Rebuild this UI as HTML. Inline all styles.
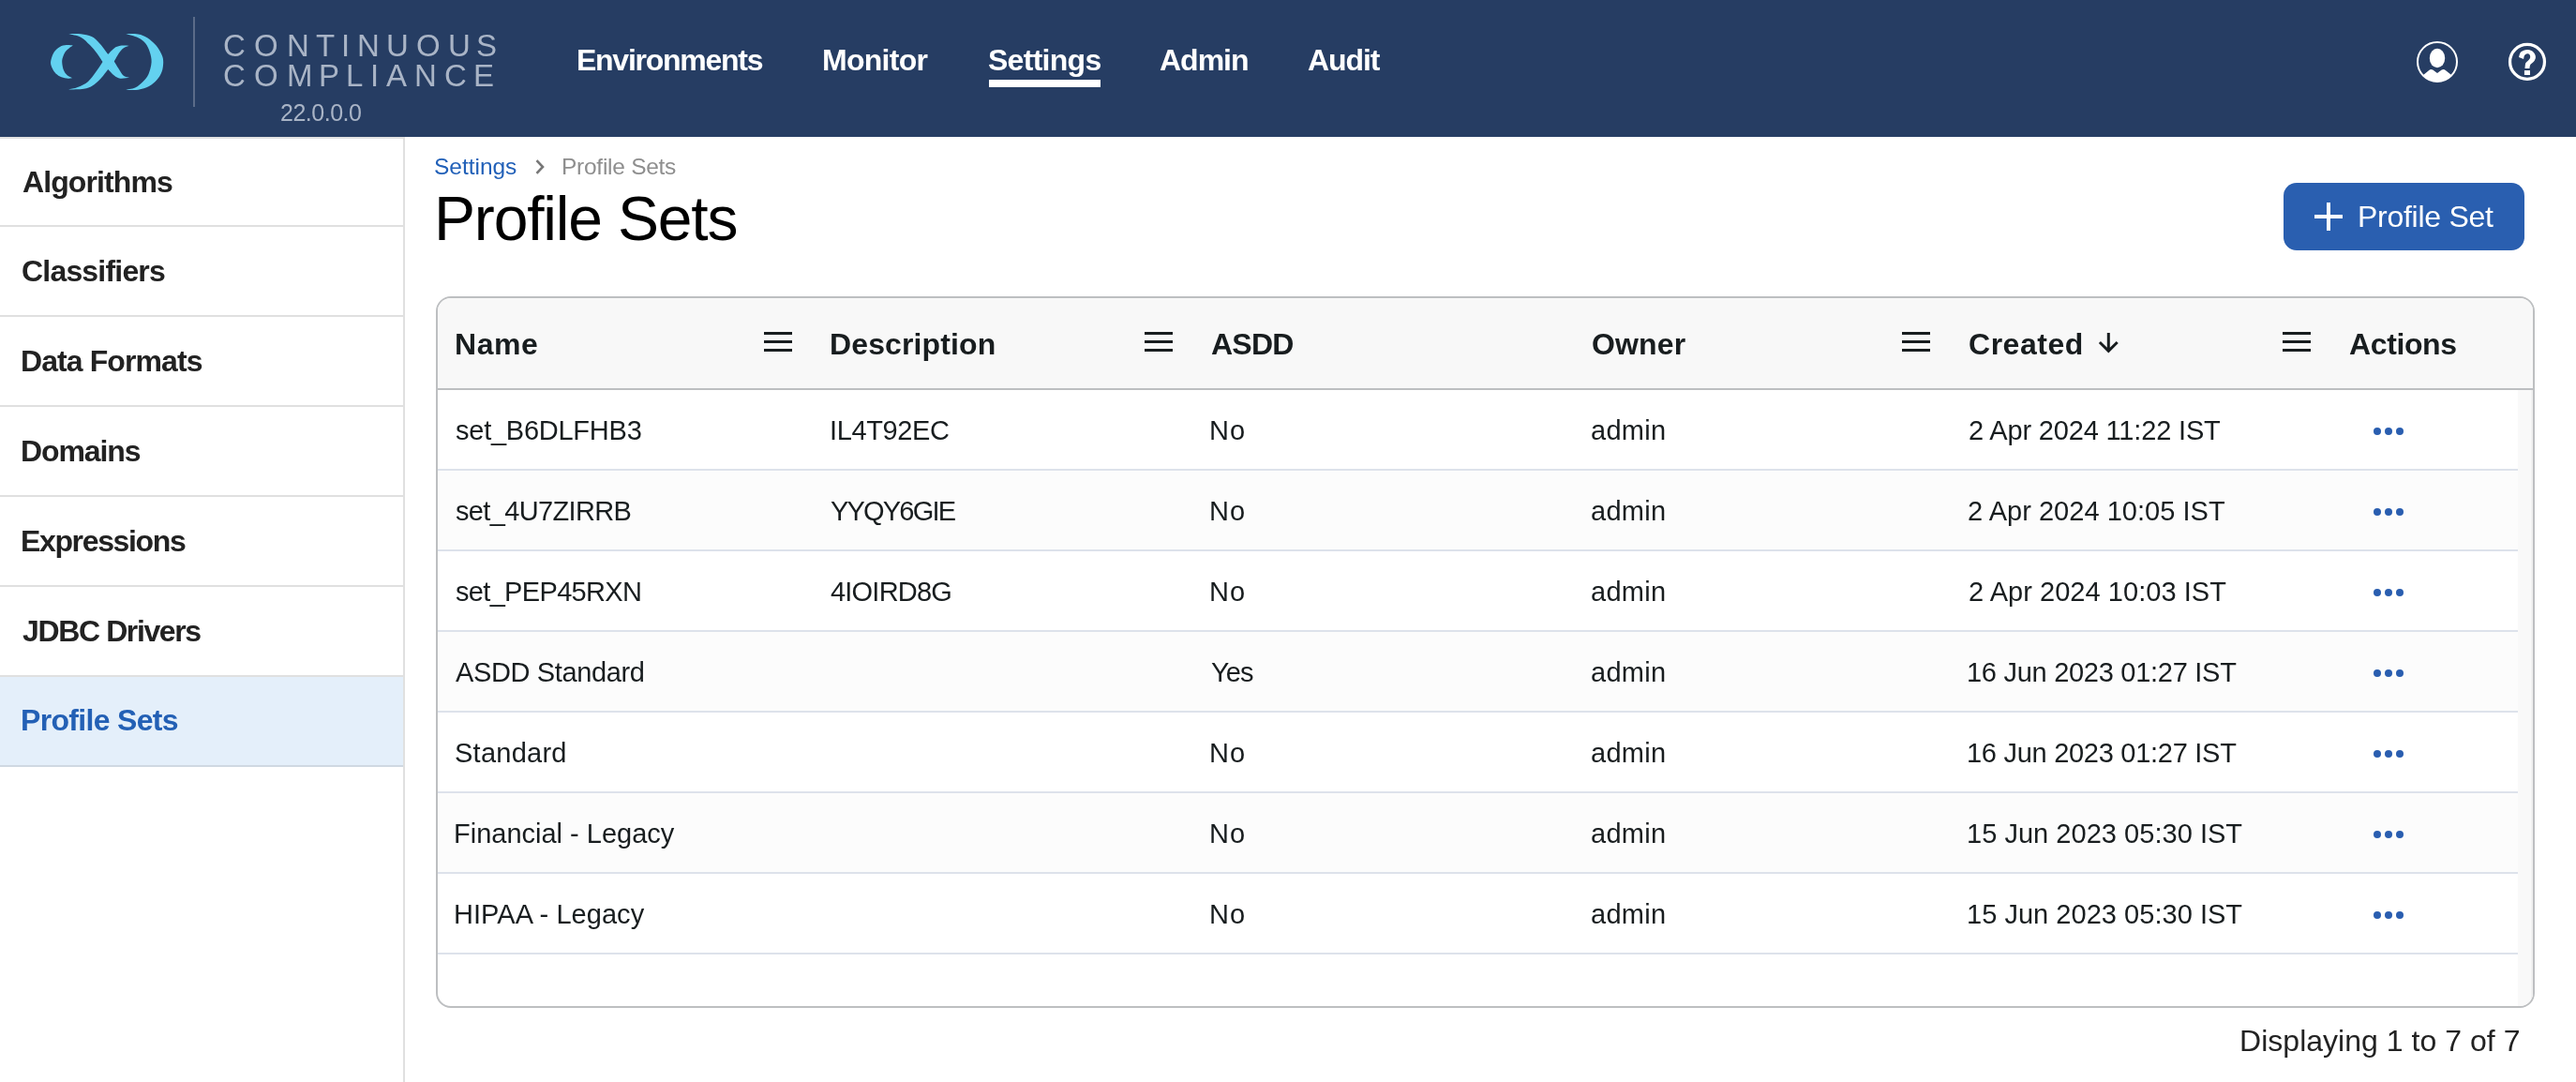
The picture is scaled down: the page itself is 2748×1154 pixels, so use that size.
<!DOCTYPE html>
<html><head><meta charset="utf-8"><style>
html,body{margin:0;padding:0;}
body{width:2748px;height:1154px;overflow:hidden;position:relative;background:#fff;font-family:"Liberation Sans",sans-serif;}
.t{position:absolute;white-space:pre;line-height:normal;-webkit-font-smoothing:antialiased;will-change:transform;}
.a{position:absolute;}
</style></head><body>
<div class="a" style="left:0;top:0;width:2748px;height:146px;background:#263D63;"></div>
<svg class="a" style="left:0;top:0" width="220" height="146" viewBox="0 0 220 146">
<g fill="#63D1F0"><path d="M77.70,48.50 C76.55,48.43 73.10,47.87 70.80,48.10 C68.50,48.33 66.05,48.72 63.90,49.90 C61.75,51.08 59.48,52.85 57.90,55.20 C56.32,57.55 54.95,61.53 54.40,64.00 C53.85,66.47 53.95,67.83 54.60,70.00 C55.25,72.17 56.75,75.07 58.30,77.00 C59.85,78.93 61.82,80.50 63.90,81.60 C65.98,82.70 68.57,83.33 70.80,83.60 C73.03,83.87 76.22,83.27 77.30,83.20 L77.30,83.20 C76.37,82.70 73.25,81.55 71.70,80.20 C70.15,78.85 68.92,77.48 68.00,75.10 C67.08,72.72 66.27,68.52 66.20,65.90 C66.13,63.28 66.83,61.40 67.60,59.40 C68.37,57.40 69.12,55.72 70.80,53.90 C72.48,52.08 76.55,49.40 77.70,48.50 Z"/><path d="M134.10,36.10 C136.32,36.17 143.57,35.80 147.40,36.50 C151.23,37.20 153.87,38.25 157.10,40.30 C160.33,42.35 164.22,45.77 166.80,48.80 C169.38,51.83 171.37,55.60 172.60,58.50 C173.83,61.40 174.20,63.18 174.20,66.20 C174.20,69.22 173.72,73.47 172.60,76.60 C171.48,79.73 169.77,82.42 167.50,85.00 C165.23,87.58 162.35,90.32 159.00,92.10 C155.65,93.88 151.70,95.10 147.40,95.70 C143.10,96.30 135.57,95.70 133.20,95.70 L133.20,95.70 C135.03,95.32 140.97,94.87 144.20,93.40 C147.43,91.93 150.23,89.27 152.60,86.90 C154.97,84.53 156.90,82.65 158.40,79.20 C159.90,75.75 161.38,70.20 161.60,66.20 C161.82,62.20 160.77,58.53 159.70,55.20 C158.63,51.87 157.25,48.68 155.20,46.20 C153.15,43.72 150.92,41.98 147.40,40.30 C143.88,38.62 136.32,36.80 134.10,36.10 Z"/><path d="M73.20,36.30 C75.37,36.30 82.10,35.83 86.20,36.30 C90.30,36.77 94.47,37.45 97.80,39.10 C101.13,40.75 103.28,43.08 106.20,46.20 C109.12,49.32 113.78,55.87 115.30,57.80 L115.30,57.80 C116.38,56.73 119.63,52.90 121.80,51.40 C123.97,49.90 125.67,49.23 128.30,48.80 C130.93,48.37 136.05,48.80 137.60,48.80 L137.60,48.80 C136.58,49.23 133.27,50.12 131.50,51.40 C129.73,52.68 128.62,54.13 127.00,56.50 C125.38,58.87 122.67,64.08 121.80,65.60 L121.80,65.60 C122.67,67.00 125.28,71.42 127.00,74.00 C128.72,76.58 130.27,79.63 132.10,81.10 C133.93,82.57 137.02,82.52 138.00,82.80 L138.00,82.80 C136.38,82.95 131.00,84.08 128.30,83.70 C125.60,83.32 123.97,82.12 121.80,80.50 C119.63,78.88 116.38,75.08 115.30,74.00 L115.30,74.00 C114.00,75.62 110.30,80.78 107.50,83.70 C104.70,86.62 101.52,89.67 98.50,91.50 C95.48,93.33 93.62,94.03 89.40,94.70 C85.18,95.37 75.90,95.37 73.20,95.50 L73.20,95.50 C74.82,95.10 79.43,94.52 82.90,93.10 C86.37,91.68 90.75,89.75 94.00,87.00 C97.25,84.25 99.82,80.12 102.40,76.60 C104.98,73.08 108.32,67.68 109.50,65.90 L109.50,65.90 C108.53,64.45 105.97,60.17 103.70,57.20 C101.43,54.23 98.82,51.02 95.90,48.10 C92.98,45.18 89.98,41.67 86.20,39.70 C82.42,37.73 75.37,36.87 73.20,36.30 Z"/></g></svg>
<div class="a" style="left:206px;top:18px;width:2px;height:96px;background:#5B6C89;"></div>
<div class="t" style="left:238.01px;top:29.84px;font-size:33px;color:#A9B4C6;">C</div>
<div class="t" style="left:271.48px;top:29.84px;font-size:33px;color:#A9B4C6;">O</div>
<div class="t" style="left:305.62px;top:29.84px;font-size:33px;color:#A9B4C6;">N</div>
<div class="t" style="left:336.58px;top:29.84px;font-size:33px;color:#A9B4C6;">T</div>
<div class="t" style="left:363.98px;top:29.84px;font-size:33px;color:#A9B4C6;">I</div>
<div class="t" style="left:381.07px;top:29.84px;font-size:33px;color:#A9B4C6;">N</div>
<div class="t" style="left:411.97px;top:29.84px;font-size:33px;color:#A9B4C6;">U</div>
<div class="t" style="left:443.93px;top:29.84px;font-size:33px;color:#A9B4C6;">O</div>
<div class="t" style="left:477.62px;top:29.84px;font-size:33px;color:#A9B4C6;">U</div>
<div class="t" style="left:508.05px;top:29.84px;font-size:33px;color:#A9B4C6;">S</div>
<div class="t" style="left:238.01px;top:61.94px;font-size:33px;color:#A9B4C6;">C</div>
<div class="t" style="left:271.48px;top:61.94px;font-size:33px;color:#A9B4C6;">O</div>
<div class="t" style="left:305.75px;top:61.94px;font-size:33px;color:#A9B4C6;">M</div>
<div class="t" style="left:340.41px;top:61.94px;font-size:33px;color:#A9B4C6;">P</div>
<div class="t" style="left:369.40px;top:61.94px;font-size:33px;color:#A9B4C6;">L</div>
<div class="t" style="left:394.78px;top:61.94px;font-size:33px;color:#A9B4C6;">I</div>
<div class="t" style="left:412.46px;top:61.94px;font-size:33px;color:#A9B4C6;">A</div>
<div class="t" style="left:442.02px;top:61.94px;font-size:33px;color:#A9B4C6;">N</div>
<div class="t" style="left:474.41px;top:61.94px;font-size:33px;color:#A9B4C6;">C</div>
<div class="t" style="left:505.30px;top:61.94px;font-size:33px;color:#A9B4C6;">E</div>
<div class="t" style="left:299.35px;top:106.00px;font-size:25px;font-weight:400;color:#A9B4C6;letter-spacing:-0.486px;">22.0.0.0</div>
<div class="t" style="left:614.86px;top:46.16px;font-size:32px;font-weight:700;color:#fff;letter-spacing:-1.265px;">Environments</div>
<div class="t" style="left:877.26px;top:46.16px;font-size:32px;font-weight:700;color:#fff;letter-spacing:-0.710px;">Monitor</div>
<div class="t" style="left:1053.89px;top:46.16px;font-size:32px;font-weight:700;color:#fff;letter-spacing:-0.720px;">Settings</div>
<div class="t" style="left:1237.34px;top:46.16px;font-size:32px;font-weight:700;color:#fff;letter-spacing:-1.010px;">Admin</div>
<div class="t" style="left:1395.44px;top:46.16px;font-size:32px;font-weight:700;color:#fff;letter-spacing:-1.080px;">Audit</div>
<div class="a" style="left:1055px;top:85px;width:119px;height:8px;background:#fff;"></div>
<svg class="a" style="left:2570px;top:36px" width="60" height="60" viewBox="0 0 60 60">
<defs><clipPath id="uc"><circle cx="30" cy="30" r="21"/></clipPath></defs>
<circle cx="30" cy="30" r="21" fill="none" stroke="#fff" stroke-width="2"/>
<ellipse cx="30" cy="26" rx="8.2" ry="10.2" fill="#fff"/>
<path clip-path="url(#uc)" d="M10,47 L16,43.3 L21.2,38.9 Q23.2,37.2 25.3,38.6 L30,41.9 L34.7,38.6 Q36.8,37.2 38.8,38.9 L44.2,43.3 L50,47 L50,60 L10,60 Z" fill="#fff"/>
</svg>
<svg class="a" style="left:2666px;top:36px" width="60" height="60" viewBox="0 0 60 60">
<circle cx="30" cy="29.9" r="18.45" fill="none" stroke="#fff" stroke-width="3.25"/>
<path d="M21.00,25.10 C21.27,24.28 21.72,21.42 22.60,20.20 C23.48,18.98 25.03,18.35 26.30,17.80 C27.57,17.25 28.85,16.87 30.20,16.90 C31.55,16.93 33.15,17.32 34.40,18.00 C35.65,18.68 36.95,19.82 37.70,21.00 C38.45,22.18 38.90,23.82 38.90,25.10 C38.90,26.38 38.27,27.72 37.70,28.70 C37.13,29.68 36.25,30.25 35.50,31.00 C34.75,31.75 33.72,32.18 33.20,33.20 C32.68,34.22 32.53,36.45 32.40,37.10 L27.50,37.10 C27.57,36.38 27.70,33.85 27.90,32.80 C28.10,31.75 28.02,31.68 28.70,30.80 C29.38,29.92 31.25,28.45 32.00,27.50 C32.75,26.55 33.13,25.98 33.20,25.10 C33.27,24.22 32.93,22.85 32.40,22.20 C31.87,21.55 30.88,21.07 30.00,21.20 C29.12,21.33 27.75,22.05 27.10,23.00 C26.45,23.95 26.27,26.25 26.10,26.90 Z" fill="#fff"/>
<rect x="26.9" y="39.1" width="6.1" height="4.9" fill="#fff"/>
</svg>
<div class="a" style="left:0;top:146px;width:430px;height:2px;background:#E2E2E2;"></div>
<div class="a" style="left:430px;top:146px;width:2px;height:1008px;background:#E0E0E0;"></div>
<div class="a" style="left:0;top:722px;width:430px;height:94px;background:#E4EFFA;"></div>
<div class="a" style="left:0;top:240px;width:430px;height:2px;background:#E0E0E0;"></div>
<div class="a" style="left:0;top:336px;width:430px;height:2px;background:#E0E0E0;"></div>
<div class="a" style="left:0;top:432px;width:430px;height:2px;background:#E0E0E0;"></div>
<div class="a" style="left:0;top:528px;width:430px;height:2px;background:#E0E0E0;"></div>
<div class="a" style="left:0;top:624px;width:430px;height:2px;background:#E0E0E0;"></div>
<div class="a" style="left:0;top:720px;width:430px;height:2px;background:#E0E0E0;"></div>
<div class="a" style="left:0;top:816px;width:430px;height:2px;background:#CFD8E2;"></div>
<div class="t" style="left:23.64px;top:175.56px;font-size:32px;font-weight:700;color:#222222;letter-spacing:-0.902px;">Algorithms</div>
<div class="t" style="left:23.32px;top:271.36px;font-size:32px;font-weight:700;color:#222222;letter-spacing:-0.806px;">Classifiers</div>
<div class="t" style="left:22.36px;top:367.16px;font-size:32px;font-weight:700;color:#222222;letter-spacing:-0.905px;">Data Formats</div>
<div class="t" style="left:22.36px;top:462.96px;font-size:32px;font-weight:700;color:#222222;letter-spacing:-1.087px;">Domains</div>
<div class="t" style="left:22.36px;top:558.76px;font-size:32px;font-weight:700;color:#222222;letter-spacing:-1.356px;">Expressions</div>
<div class="t" style="left:23.96px;top:654.56px;font-size:32px;font-weight:700;color:#222222;letter-spacing:-1.378px;">JDBC Drivers</div>
<div class="t" style="left:22.36px;top:750.36px;font-size:32px;font-weight:700;color:#2360B5;letter-spacing:-0.680px;">Profile Sets</div>
<div class="t" style="left:463.07px;top:164.26px;font-size:24.5px;font-weight:400;color:#2160B8;letter-spacing:-0.026px;">Settings</div>
<svg class="a" style="left:566px;top:166px" width="20" height="24" viewBox="0 0 20 24"><path d="M6.5,5.2 L13,12 L6.5,18.8" fill="none" stroke="#777" stroke-width="2.6"/></svg>
<div class="t" style="left:598.64px;top:164.26px;font-size:24.5px;font-weight:400;color:#8E8E8E;letter-spacing:-0.264px;">Profile Sets</div>
<div class="t" style="left:463.02px;top:194.78px;font-size:66px;font-weight:400;color:#000;letter-spacing:-1.182px;">Profile Sets</div>
<div class="a" style="left:2436px;top:195px;width:257px;height:72px;background:#2A5FB0;border-radius:14px;"></div>
<div class="a" style="left:2469px;top:229.2px;width:30px;height:3.6px;background:#fff;"></div>
<div class="a" style="left:2482.2px;top:216px;width:3.6px;height:30px;background:#fff;"></div>
<div class="t" style="left:2515.24px;top:212.56px;font-size:32px;font-weight:400;color:#fff;letter-spacing:-0.266px;">Profile Set</div>
<div class="a" style="left:465px;top:316px;width:2235px;height:755px;border:2px solid #BDBFC1;border-radius:16px;overflow:hidden;background:#fff;">
<div class="a" style="left:0;top:0;width:2235px;height:96px;background:#F8F8F8;"></div>
<div class="a" style="left:0;top:96px;width:2235px;height:2px;background:#BDBFC1;"></div>
<div class="a" style="left:2219px;top:98px;width:16px;height:700px;background:#F9F9F9;"></div>
<div class="a" style="left:2233px;top:98px;width:2px;height:700px;background:#F0F0F0;"></div>
<div class="a" style="left:0;top:98px;width:2219px;height:84px;background:#FFFFFF;"></div>
<div class="a" style="left:0;top:182px;width:2219px;height:2px;background:#DDE2EB;"></div>
<div class="a" style="left:0;top:184px;width:2219px;height:84px;background:#FCFCFC;"></div>
<div class="a" style="left:0;top:268px;width:2219px;height:2px;background:#DDE2EB;"></div>
<div class="a" style="left:0;top:270px;width:2219px;height:84px;background:#FFFFFF;"></div>
<div class="a" style="left:0;top:354px;width:2219px;height:2px;background:#DDE2EB;"></div>
<div class="a" style="left:0;top:356px;width:2219px;height:84px;background:#FCFCFC;"></div>
<div class="a" style="left:0;top:440px;width:2219px;height:2px;background:#DDE2EB;"></div>
<div class="a" style="left:0;top:442px;width:2219px;height:84px;background:#FFFFFF;"></div>
<div class="a" style="left:0;top:526px;width:2219px;height:2px;background:#DDE2EB;"></div>
<div class="a" style="left:0;top:528px;width:2219px;height:84px;background:#FCFCFC;"></div>
<div class="a" style="left:0;top:612px;width:2219px;height:2px;background:#DDE2EB;"></div>
<div class="a" style="left:0;top:614px;width:2219px;height:84px;background:#FFFFFF;"></div>
<div class="a" style="left:0;top:698px;width:2219px;height:2px;background:#DDE2EB;"></div>
</div>
<div class="t" style="left:485.36px;top:348.56px;font-size:32px;font-weight:700;color:#181D1F;letter-spacing:0.587px;">Name</div>
<div class="t" style="left:885.06px;top:348.56px;font-size:32px;font-weight:700;color:#181D1F;letter-spacing:0.116px;">Description</div>
<div class="t" style="left:1291.94px;top:348.56px;font-size:32px;font-weight:700;color:#181D1F;letter-spacing:-0.773px;">ASDD</div>
<div class="t" style="left:1697.52px;top:348.56px;font-size:32px;font-weight:700;color:#181D1F;letter-spacing:0.145px;">Owner</div>
<div class="t" style="left:2100.02px;top:348.56px;font-size:32px;font-weight:700;color:#181D1F;letter-spacing:0.527px;">Created</div>
<div class="t" style="left:2506.44px;top:348.56px;font-size:32px;font-weight:700;color:#181D1F;letter-spacing:-0.380px;">Actions</div>
<div class="a" style="left:815px;top:354.1px;width:30px;height:2.75px;background:#181D1F;"></div>
<div class="a" style="left:815px;top:363.1px;width:30px;height:2.75px;background:#181D1F;"></div>
<div class="a" style="left:815px;top:372.2px;width:30px;height:2.75px;background:#181D1F;"></div>
<div class="a" style="left:1221px;top:354.1px;width:30px;height:2.75px;background:#181D1F;"></div>
<div class="a" style="left:1221px;top:363.1px;width:30px;height:2.75px;background:#181D1F;"></div>
<div class="a" style="left:1221px;top:372.2px;width:30px;height:2.75px;background:#181D1F;"></div>
<div class="a" style="left:2029px;top:354.1px;width:30px;height:2.75px;background:#181D1F;"></div>
<div class="a" style="left:2029px;top:363.1px;width:30px;height:2.75px;background:#181D1F;"></div>
<div class="a" style="left:2029px;top:372.2px;width:30px;height:2.75px;background:#181D1F;"></div>
<div class="a" style="left:2435px;top:354.1px;width:30px;height:2.75px;background:#181D1F;"></div>
<div class="a" style="left:2435px;top:363.1px;width:30px;height:2.75px;background:#181D1F;"></div>
<div class="a" style="left:2435px;top:372.2px;width:30px;height:2.75px;background:#181D1F;"></div>
<svg class="a" style="left:2234px;top:352px" width="30" height="28" viewBox="0 0 30 28"><path d="M15.3,3 L15.3,21.5 M5.9,13 L15.3,22.3 L24.7,13" fill="none" stroke="#181D1F" stroke-width="3"/></svg>
<div class="t" style="left:485.83px;top:443.32px;font-size:29px;font-weight:400;color:#181D1F;letter-spacing:-0.248px;">set_B6DLFHB3</div>
<div class="t" style="left:884.79px;top:443.32px;font-size:29px;font-weight:400;color:#181D1F;letter-spacing:-0.376px;">IL4T92EC</div>
<div class="t" style="left:1290.18px;top:443.32px;font-size:29px;font-weight:400;color:#181D1F;letter-spacing:1.060px;">No</div>
<div class="t" style="left:1697.14px;top:443.32px;font-size:29px;font-weight:400;color:#181D1F;letter-spacing:0.255px;">admin</div>
<div class="t" style="left:2099.85px;top:443.32px;font-size:29px;font-weight:400;color:#181D1F;letter-spacing:-0.163px;">2 Apr 2024 11:22 IST</div>
<svg class="a" style="left:2528px;top:452px" width="40" height="16" viewBox="0 0 40 16"><g fill="#2A5EB0"><circle cx="8" cy="8" r="4"/><circle cx="20" cy="8" r="4"/><circle cx="32" cy="8" r="4"/></g></svg>
<div class="t" style="left:485.93px;top:529.32px;font-size:29px;font-weight:400;color:#181D1F;letter-spacing:-0.651px;">set_4U7ZIRRB</div>
<div class="t" style="left:886.13px;top:529.32px;font-size:29px;font-weight:400;color:#181D1F;letter-spacing:-1.803px;">YYQY6GIE</div>
<div class="t" style="left:1290.18px;top:529.32px;font-size:29px;font-weight:400;color:#181D1F;letter-spacing:1.060px;">No</div>
<div class="t" style="left:1697.14px;top:529.32px;font-size:29px;font-weight:400;color:#181D1F;letter-spacing:0.255px;">admin</div>
<div class="t" style="left:2099.35px;top:529.32px;font-size:29px;font-weight:400;color:#181D1F;letter-spacing:0.031px;">2 Apr 2024 10:05 IST</div>
<svg class="a" style="left:2528px;top:538px" width="40" height="16" viewBox="0 0 40 16"><g fill="#2A5EB0"><circle cx="8" cy="8" r="4"/><circle cx="20" cy="8" r="4"/><circle cx="32" cy="8" r="4"/></g></svg>
<div class="t" style="left:485.93px;top:615.32px;font-size:29px;font-weight:400;color:#181D1F;letter-spacing:-0.673px;">set_PEP45RXN</div>
<div class="t" style="left:886.42px;top:615.32px;font-size:29px;font-weight:400;color:#181D1F;letter-spacing:-0.790px;">4IOIRD8G</div>
<div class="t" style="left:1290.18px;top:615.32px;font-size:29px;font-weight:400;color:#181D1F;letter-spacing:1.060px;">No</div>
<div class="t" style="left:1697.14px;top:615.32px;font-size:29px;font-weight:400;color:#181D1F;letter-spacing:0.255px;">admin</div>
<div class="t" style="left:2099.95px;top:615.32px;font-size:29px;font-weight:400;color:#181D1F;letter-spacing:0.041px;">2 Apr 2024 10:03 IST</div>
<svg class="a" style="left:2528px;top:624px" width="40" height="16" viewBox="0 0 40 16"><g fill="#2A5EB0"><circle cx="8" cy="8" r="4"/><circle cx="20" cy="8" r="4"/><circle cx="32" cy="8" r="4"/></g></svg>
<div class="t" style="left:486.30px;top:701.32px;font-size:29px;font-weight:400;color:#181D1F;letter-spacing:-0.371px;">ASDD Standard</div>
<div class="t" style="left:1291.93px;top:701.32px;font-size:29px;font-weight:400;color:#181D1F;letter-spacing:-0.865px;">Yes</div>
<div class="t" style="left:1697.14px;top:701.32px;font-size:29px;font-weight:400;color:#181D1F;letter-spacing:0.255px;">admin</div>
<div class="t" style="left:2098.48px;top:701.32px;font-size:29px;font-weight:400;color:#181D1F;letter-spacing:-0.279px;">16 Jun 2023 01:27 IST</div>
<svg class="a" style="left:2528px;top:710px" width="40" height="16" viewBox="0 0 40 16"><g fill="#2A5EB0"><circle cx="8" cy="8" r="4"/><circle cx="20" cy="8" r="4"/><circle cx="32" cy="8" r="4"/></g></svg>
<div class="t" style="left:484.85px;top:787.32px;font-size:29px;font-weight:400;color:#181D1F;letter-spacing:0.249px;">Standard</div>
<div class="t" style="left:1290.18px;top:787.32px;font-size:29px;font-weight:400;color:#181D1F;letter-spacing:1.060px;">No</div>
<div class="t" style="left:1697.14px;top:787.32px;font-size:29px;font-weight:400;color:#181D1F;letter-spacing:0.255px;">admin</div>
<div class="t" style="left:2098.48px;top:787.32px;font-size:29px;font-weight:400;color:#181D1F;letter-spacing:-0.279px;">16 Jun 2023 01:27 IST</div>
<svg class="a" style="left:2528px;top:796px" width="40" height="16" viewBox="0 0 40 16"><g fill="#2A5EB0"><circle cx="8" cy="8" r="4"/><circle cx="20" cy="8" r="4"/><circle cx="32" cy="8" r="4"/></g></svg>
<div class="t" style="left:483.98px;top:873.32px;font-size:29px;font-weight:400;color:#181D1F;letter-spacing:-0.004px;">Financial - Legacy</div>
<div class="t" style="left:1290.18px;top:873.32px;font-size:29px;font-weight:400;color:#181D1F;letter-spacing:1.060px;">No</div>
<div class="t" style="left:1697.14px;top:873.32px;font-size:29px;font-weight:400;color:#181D1F;letter-spacing:0.255px;">admin</div>
<div class="t" style="left:2098.48px;top:873.32px;font-size:29px;font-weight:400;color:#181D1F;letter-spacing:0.031px;">15 Jun 2023 05:30 IST</div>
<svg class="a" style="left:2528px;top:882px" width="40" height="16" viewBox="0 0 40 16"><g fill="#2A5EB0"><circle cx="8" cy="8" r="4"/><circle cx="20" cy="8" r="4"/><circle cx="32" cy="8" r="4"/></g></svg>
<div class="t" style="left:483.98px;top:959.32px;font-size:29px;font-weight:400;color:#181D1F;letter-spacing:0.046px;">HIPAA - Legacy</div>
<div class="t" style="left:1290.18px;top:959.32px;font-size:29px;font-weight:400;color:#181D1F;letter-spacing:1.060px;">No</div>
<div class="t" style="left:1697.14px;top:959.32px;font-size:29px;font-weight:400;color:#181D1F;letter-spacing:0.255px;">admin</div>
<div class="t" style="left:2098.48px;top:959.32px;font-size:29px;font-weight:400;color:#181D1F;letter-spacing:0.031px;">15 Jun 2023 05:30 IST</div>
<svg class="a" style="left:2528px;top:968px" width="40" height="16" viewBox="0 0 40 16"><g fill="#2A5EB0"><circle cx="8" cy="8" r="4"/><circle cx="20" cy="8" r="4"/><circle cx="32" cy="8" r="4"/></g></svg>
<div class="t" style="left:2389.04px;top:1092.36px;font-size:32px;font-weight:400;color:#222222;letter-spacing:0.028px;">Displaying 1 to 7 of 7</div>
</body></html>
